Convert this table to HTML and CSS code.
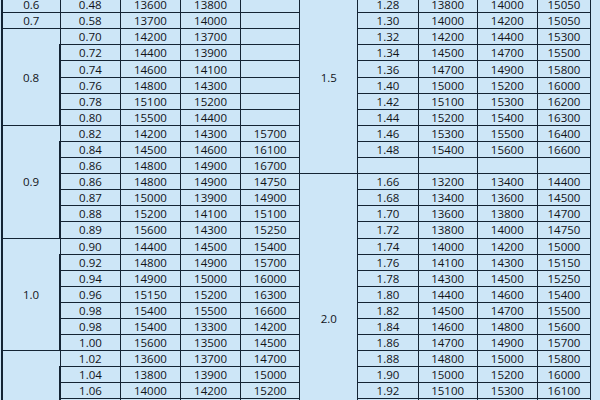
FILE: index.html
```html
<!DOCTYPE html>
<html>
<head>
<meta charset="utf-8">
<link rel="stylesheet" href="styles.css">
</head>
<body>
<div class="sheet">
<table class="price">
<colgroup>
<col class="c-a"><col class="c-b"><col class="c-c"><col class="c-d"><col class="c-e">
<col class="c-f"><col class="c-g"><col class="c-h"><col class="c-i"><col class="c-j">
</colgroup>
<tbody>
<tr><td>0.5</td><td>0.46</td><td>13400</td><td>13600</td><td></td><td rowspan="12">1.5</td><td>1.26</td><td>13600</td><td>13800</td><td>14800</td></tr>
<tr><td>0.6</td><td>0.48</td><td>13600</td><td>13800</td><td></td><td>1.28</td><td>13800</td><td>14000</td><td>15050</td></tr>
<tr><td>0.7</td><td>0.58</td><td>13700</td><td>14000</td><td></td><td>1.30</td><td>14000</td><td>14200</td><td>15050</td></tr>
<tr><td rowspan="6">0.8</td><td>0.70</td><td>14200</td><td>13700</td><td></td><td>1.32</td><td>14200</td><td>14400</td><td>15300</td></tr>
<tr><td>0.72</td><td>14400</td><td>13900</td><td></td><td>1.34</td><td>14500</td><td>14700</td><td>15500</td></tr>
<tr><td>0.74</td><td>14600</td><td>14100</td><td></td><td>1.36</td><td>14700</td><td>14900</td><td>15800</td></tr>
<tr><td>0.76</td><td>14800</td><td>14300</td><td></td><td>1.40</td><td>15000</td><td>15200</td><td>16000</td></tr>
<tr><td>0.78</td><td>15100</td><td>15200</td><td></td><td>1.42</td><td>15100</td><td>15300</td><td>16200</td></tr>
<tr><td>0.80</td><td>15500</td><td>14400</td><td></td><td>1.44</td><td>15200</td><td>15400</td><td>16300</td></tr>
<tr><td rowspan="7">0.9</td><td>0.82</td><td>14200</td><td>14300</td><td>15700</td><td>1.46</td><td>15300</td><td>15500</td><td>16400</td></tr>
<tr><td>0.84</td><td>14500</td><td>14600</td><td>16100</td><td>1.48</td><td>15400</td><td>15600</td><td>16600</td></tr>
<tr><td>0.86</td><td>14800</td><td>14900</td><td>16700</td><td></td><td></td><td></td><td></td></tr>
<tr><td>0.86</td><td>14800</td><td>14900</td><td>14750</td><td rowspan="18">2.0</td><td>1.66</td><td>13200</td><td>13400</td><td>14400</td></tr>
<tr><td>0.87</td><td>15000</td><td>13900</td><td>14900</td><td>1.68</td><td>13400</td><td>13600</td><td>14500</td></tr>
<tr><td>0.88</td><td>15200</td><td>14100</td><td>15100</td><td>1.70</td><td>13600</td><td>13800</td><td>14700</td></tr>
<tr><td>0.89</td><td>15600</td><td>14300</td><td>15250</td><td>1.72</td><td>13800</td><td>14000</td><td>14750</td></tr>
<tr><td rowspan="7">1.0</td><td>0.90</td><td>14400</td><td>14500</td><td>15400</td><td>1.74</td><td>14000</td><td>14200</td><td>15000</td></tr>
<tr><td>0.92</td><td>14800</td><td>14900</td><td>15700</td><td>1.76</td><td>14100</td><td>14300</td><td>15150</td></tr>
<tr><td>0.94</td><td>14900</td><td>15000</td><td>16000</td><td>1.78</td><td>14300</td><td>14500</td><td>15250</td></tr>
<tr><td>0.96</td><td>15150</td><td>15200</td><td>16300</td><td>1.80</td><td>14400</td><td>14600</td><td>15400</td></tr>
<tr><td>0.98</td><td>15400</td><td>15500</td><td>16600</td><td>1.82</td><td>14500</td><td>14700</td><td>15500</td></tr>
<tr><td>0.98</td><td>15400</td><td>13300</td><td>14200</td><td>1.84</td><td>14600</td><td>14800</td><td>15600</td></tr>
<tr><td>1.00</td><td>15600</td><td>13500</td><td>14500</td><td>1.86</td><td>14700</td><td>14900</td><td>15700</td></tr>
<tr><td rowspan="7">1.2</td><td>1.02</td><td>13600</td><td>13700</td><td>14700</td><td>1.88</td><td>14800</td><td>15000</td><td>15800</td></tr>
<tr><td>1.04</td><td>13800</td><td>13900</td><td>15000</td><td>1.90</td><td>15000</td><td>15200</td><td>16000</td></tr>
<tr><td>1.06</td><td>14000</td><td>14200</td><td>15200</td><td>1.92</td><td>15100</td><td>15300</td><td>16100</td></tr>
<tr><td>1.08</td><td>14200</td><td>14400</td><td>15400</td><td>1.94</td><td>15200</td><td>15400</td><td>16200</td></tr>
<tr><td>1.10</td><td>14400</td><td>14600</td><td>15600</td><td>1.96</td><td>15300</td><td>15500</td><td>16400</td></tr>
<tr><td>1.12</td><td>14600</td><td>14800</td><td>15800</td><td>1.98</td><td>15400</td><td>15600</td><td>16600</td></tr>
<tr><td>1.14</td><td>14800</td><td>15000</td><td>16000</td><td>2.00</td><td>15600</td><td>15800</td><td>16800</td></tr>
</tbody>
</table>
</div>
</body>
</html>
```
FILE: styles.css
```css
html, body {
  margin: 0;
  padding: 0;
  background: #cde6f7;
  overflow: hidden;
  width: 600px;
  height: 400px;
}

.sheet {
  padding-left: 1px;
  margin-top: -20px;
}

.price {
  border-collapse: collapse;
  table-layout: fixed;
  width: 590px;
  font-family: "Open Sans", "Noto Sans", sans-serif;
  font-size: 11.5px;
  color: #111317;
}

.price td {
  height: 15.1px;
  padding: 0;
  line-height: 15px;
  text-align: center;
  vertical-align: middle;
  border: 1px solid #142434;
  background: #cde6f7;
  white-space: nowrap;
  overflow: hidden;
}

.price tr > td:first-child {
  border-left: 2px solid #142434;
}

.c-a { width: 57px; }
.c-b { width: 59px; }
.c-c { width: 59px; }
.c-d { width: 59px; }
.c-e { width: 58px; }
.c-f { width: 57px; }
.c-g { width: 59px; }
.c-h { width: 58px; }
.c-i { width: 59px; }
.c-j { width: 52px; }
```
